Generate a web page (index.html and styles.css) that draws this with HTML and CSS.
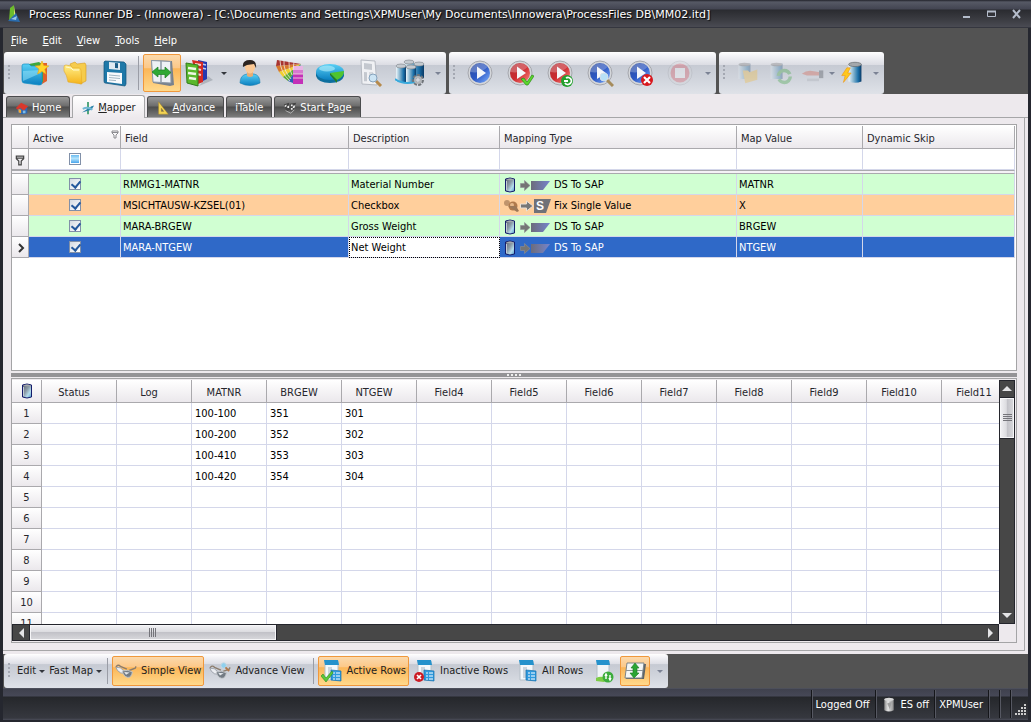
FILE: index.html
```html
<!DOCTYPE html>
<html lang="en">
<head>
    <meta charset="UTF-8">
    <meta name="viewport" content="width=device-width, initial-scale=1.0">
    <title>Process Runner DB</title>
    <link rel="stylesheet" href="styles.css">
</head>
<body>
    <!-- shared icons -->
    <svg class="defs" aria-hidden="true">
        <defs>
            <linearGradient id="gBlue" x1="0" y1="0" x2="0" y2="1"><stop offset="0" stop-color="#5ad0f5"/><stop offset="1" stop-color="#0a7fc0"/></linearGradient>
            <linearGradient id="gYellow" x1="0" y1="0" x2="0" y2="1"><stop offset="0" stop-color="#fff08a"/><stop offset="1" stop-color="#f5b31a"/></linearGradient>
            <linearGradient id="gPlay" x1="0" y1="0" x2="1" y2="1"><stop offset="0" stop-color="#2c4a9c"/><stop offset=".5" stop-color="#2d58c4"/><stop offset="1" stop-color="#7db0ff"/></linearGradient>
            <linearGradient id="gRed" x1="0" y1="0" x2="1" y2="1"><stop offset="0" stop-color="#b03038"/><stop offset=".5" stop-color="#cc2a30"/><stop offset="1" stop-color="#ff8a80"/></linearGradient>
            <linearGradient id="gDb" x1="0" y1="0" x2="1" y2="0"><stop offset="0" stop-color="#eef6fa"/><stop offset=".4" stop-color="#7fb0cc"/><stop offset=".75" stop-color="#1a6fa8"/><stop offset="1" stop-color="#0b3a66"/></linearGradient>
            <linearGradient id="gCyl" x1="0" y1="0" x2="1" y2="1"><stop offset="0" stop-color="#5c6070"/><stop offset=".45" stop-color="#8c9ca8"/><stop offset=".7" stop-color="#b4dcec"/><stop offset="1" stop-color="#4a98c8"/></linearGradient>
            <linearGradient id="gTrap" x1="0" y1="0" x2="1" y2="0"><stop offset="0" stop-color="#6c6c7c"/><stop offset="1" stop-color="#7684cc"/></linearGradient>
            <linearGradient id="gGrey" x1="0" y1="0" x2="1" y2="0"><stop offset="0" stop-color="#8c8c8c"/><stop offset=".4" stop-color="#e6e6e6"/><stop offset="1" stop-color="#8a8a8a"/></linearGradient>
        </defs>
        <symbol id="play" viewBox="0 0 28 28">
            <circle cx="14" cy="14" r="12" fill="#d4d6da" stroke="#a6a8ae"/>
            <circle cx="14" cy="14" r="10" fill="url(#gPlay)"/>
            <path d="M4.500 13a9.500 9.500 0 0 1 17-5Q15 15 4.500 13z" fill="#fff" opacity=".25"/>
            <path d="M11 7.500 20 14 11 20z" fill="#f4f6fa"/>
        </symbol>
        <symbol id="playRed" viewBox="0 0 28 28">
            <circle cx="14" cy="14" r="12" fill="#d4d6da" stroke="#a6a8ae"/>
            <circle cx="14" cy="14" r="10" fill="url(#gRed)"/>
            <path d="M4.500 13a9.500 9.500 0 0 1 17-5Q15 15 4.500 13z" fill="#fff" opacity=".25"/>
            <path d="M11 7.500 20 14 11 20z" fill="#f4f6fa"/>
        </symbol>
        <symbol id="db" viewBox="0 0 12 16">
            <path d="M1.500 2Q6 0 10.500 2v12Q6 16 1.500 14z" fill="url(#gCyl)" stroke="#141c6c"/>
            <path d="M2 2.500Q6 4 10 2.500 6 .5 2 2.500z" fill="#a4a8ac"/>
            <path d="M2.500 4v9" stroke="#c4ccd4"/>
        </symbol>
        <symbol id="ds" viewBox="0 0 48 16">
            <use href="#db" x="0" y="0" width="12" height="16"/>
            <path d="M16.500 6.500h4V3.500L26 8.500l-5.500 5v-3h-4z" fill="#757575" stroke="#8f8f96" stroke-width=".6"/>
            <path d="M27 4h19l-7 9H27z" fill="url(#gTrap)"/>
        </symbol>
        <symbol id="rows" viewBox="0 0 22 24">
            <path d="M4 2h13v19H4z" fill="#f4f8fb" stroke="#b6c0c8"/><path d="M3 1h14l1 5H4z" fill="#2592cc"/>
            <path d="M7 8h4v11H7z" fill="#ccd6de"/>
            <path d="M10 11l10 1v10l-10-1z" fill="#2f9ade" stroke="#1470ac" stroke-width=".7"/>
            <path d="M12 14h2m1 0h4M12 17h2m1 0h4M12 20h2m1 0h4" stroke="#fff"/>
        </symbol>
        <symbol id="glasses" viewBox="0 0 24 16">
            <path d="M1 4q2-4 5-1l7 3M14 8l8-3 1-2" fill="none" stroke="#8c7c6c" stroke-width="1.500"/>
            <path d="M1 4q5-1 9 4-1 4-4 2-4-2-5-6z" fill="#eceef2" stroke="#9aa0a8"/>
            <path d="M8 8q6-2 11 1-1 6-5 6-5-1-6-7z" fill="#737b84" stroke="#c4c8cc"/>
            <path d="M10 9l6 .5-4 2.500z" fill="#e4e8ec"/>
        </symbol>
        <symbol id="funnel" viewBox="0 0 8 9">
            <path d="M1 1h6v2L5 5v3H3V5L1 3zM1 2.500h6" fill="none" stroke="currentColor"/>
        </symbol>
    </svg>

    <header class="title-bar">
        <svg class="app-icon" viewBox="0 0 14 18"><path d="M3 3 7 0v14l-5 2z" fill="#6cbc2c"/><path d="M7 1l2 12-2 2z" fill="#d4e86a"/><path d="M1 16l8-8 4 9z" fill="#2a6cae"/><path d="M4 14l6-3-1 4z" fill="#9cc8e8"/></svg>
        <h1>Process Runner DB - (Innowera) - [C:\Documents and Settings\XPMUser\My Documents\Innowera\ProcessFiles DB\MM02.itd]</h1>
        <div class="window-buttons">
            <button aria-label="Minimize"><svg width="11" height="10"><path d="M2 8h7" stroke="#b4bccb" stroke-width="2"/></svg></button>
            <button aria-label="Maximize"><svg width="11" height="10"><path d="M1.500 2.500h8v5h-8z" fill="none" stroke="#b4bccb"/><path d="M1 2.500h9" stroke="#b4bccb" stroke-width="2"/></svg></button>
            <button aria-label="Close"><svg width="11" height="10"><path d="M2 1l7 8M9 1L2 9" stroke="#b4bccb" stroke-width="2"/></svg></button>
        </div>
    </header>

    <nav class="menu">
        <button><u>F</u>ile</button>
        <button><u>E</u>dit</button>
        <button><u>V</u>iew</button>
        <button><u>T</u>ools</button>
        <button><u>H</u>elp</button>
    </nav>

    <div class="toolbars">
        <div class="toolbar">
            <span class="handle"></span>
            <button class="tool" aria-label="New"><svg viewBox="0 0 28 28"><path d="M13 4h13v18l-5 3V8z" fill="#e0602c"/><path d="M8 5l10-2 4 3v17H8z" fill="#3fa83c"/><path d="M1 7q0-2 2-2h5l2 2h8q3 0 3 3v14q0 2-3 2L3 24q-2 0-2-3z" fill="url(#gBlue)" stroke="#1490c4" stroke-width=".7"/><path d="M2 12l18-1v3L2 22z" fill="#9ce8fc" opacity=".5"/><path d="M21 2l1.800 4.500 5 .5-4 3.200 1.400 5-4.200-2.800-4.400 2.600 1.400-5L14 7l5-.5z" fill="#ffd52a" stroke="#e8a010" stroke-width=".6"/></svg></button>
            <button class="tool" aria-label="Open"><svg viewBox="0 0 28 28"><path d="M9 5l5-2 2 2 8-1 1 2v16l-6 3z" fill="#f6cc4c" stroke="#d89c1c" stroke-width=".6"/><path d="M3 8q0-2 2-2l5 1 2 2h6q2 0 2 3l1 13-14-2q-1-7-4-11z" fill="url(#gYellow)" stroke="#e4a824" stroke-width=".6"/><path d="M5 8l5 1 2 2h6" fill="none" stroke="#fffad0"/></svg></button>
            <button class="tool" aria-label="Save"><svg viewBox="0 0 28 28"><path d="M4 2l19 1 2 2v20l-1 2L4 24q-1 0-1-2V3z" fill="#1e78a8" stroke="#11557c" stroke-width=".7"/><path d="M8 3l11 1v7L8 10z" fill="#dfeaf2"/><path d="M14 4l3 .3v5l-3-.3z" fill="#1b5c86"/><path d="M6 13l15 1v11L6 23z" fill="#f8fafc"/><path d="M8 16l11 1M8 18.500l11 1M8 21l7 .6" stroke="#8ba4b4" stroke-width=".8"/></svg></button>
            <span class="divider"></span>
            <button class="tool pressed" aria-label="Mapper view"><svg viewBox="0 0 28 28"><path d="M3 1l21 1 2 24-4 1L5 24z" fill="#78828e"/><path d="M3.500 1.500l19 1 .5 21.500-18-1z" fill="#eef1f5" stroke="#8e99a6"/><path d="M13 2v21" stroke="#8e99a4" stroke-width="1.500"/><path d="M4 13l6-5v3h7V8l6 5.500-6 5.500v-3.500h-7V18z" fill="#2fa834" stroke="#1c7c24" stroke-width=".7"/></svg></button>
            <button class="tool medium" aria-label="Templates"><svg viewBox="0 0 28 28"><path d="M14 27l14-6-5-4z" fill="#8c949c" opacity=".5"/><path d="M13 1l9 2v17l-6 3z" fill="#2438b0"/><path d="M17 5l4 1m-4 3 4 1" stroke="#c4ccf0" stroke-width="1.500"/><path d="M7 1l11 2v20l-5 2z" fill="#d42a24"/><path d="M10 5l6 1m-4 4 4 1m-4 4 4 1" stroke="#f8d4d0" stroke-width="2"/><path d="M1 4l12 2v21L2 24z" fill="#5ab82c" stroke="#327c1c"/><path d="M3 9l8 1M3 14l8 1M4 19l7 1" stroke="#eef8e4" stroke-width="2.500"/></svg></button>
            <button class="arrow small dark" aria-label="Template list"></button>
            <button class="tool" aria-label="User"><svg viewBox="0 0 28 28"><path d="M4 24q0-8 7-9h7q6 1 6 9-10 5-20 0z" fill="url(#gBlue)" stroke="#107cae" stroke-width=".6"/><path d="M11 12h6v5q-3 2-6 0z" fill="#e8ac74"/><ellipse cx="14" cy="8" rx="5" ry="6.500" fill="#fbc894"/><path d="M7 8q-1-7 7-7 7 0 6 8l-2-4-7 1z" fill="#2c2420"/></svg></button>
            <button class="tool" aria-label="Colors"><svg viewBox="0 0 28 28"><path d="M25 5 1 1 0 7z" fill="#a83430"/><path d="M25 5 0 7l3 6z" fill="#d8782c"/><path d="M25 5 3 13l4 5z" fill="#f0d030"/><path d="M25 5 7 18l5 4z" fill="#5cae34"/><path d="M25 5 12 22l5 2z" fill="#2c60b4"/><path d="M17 7h10v18H17z" fill="#c430b8"/><path d="M17 7h10v4H17z" fill="#e8b4e4"/><path d="M17 11h10v4H17z" fill="#d878d0"/><path d="M17 15h10M17 19h10M18 3 17 11M13 2q-1 6 3 14M8 2q-1 9 7 18M4 1q0 12 10 21" fill="none" stroke="#f0e8e0" stroke-width=".8"/></svg></button>
            <button class="tool" aria-label="Chart"><svg viewBox="0 0 28 28"><path d="M0 13v4q2 7 14 7t14-7v-4z" fill="#0d6f9e"/><ellipse cx="14" cy="13" rx="14" ry="8" fill="url(#gBlue)"/><ellipse cx="11" cy="9.500" rx="8" ry="3" fill="#b8f0fc" opacity=".6"/><path d="M14 14l14-2q0 6-7 9z" fill="#4fc42e"/><path d="M14 14l7 7v3l-7-8z" fill="#26801c"/></svg></button>
            <button class="tool" aria-label="Preview"><svg viewBox="0 0 28 28"><path d="M5 1l14 1 2 24-15-1z" fill="#f0f1f4" stroke="#b6bac2"/><path d="M8 4l8 1v6l-8-1zM8 13l3 .2v9H8z" fill="#c4c8cf"/><path d="M13 13h4v8h-4z" fill="#d6d9de"/><path d="M20 22l5 5" stroke="#b68a4c" stroke-width="3"/><circle cx="17" cy="19" r="4" fill="#cce4f4" stroke="#86a2bc"/></svg></button>
            <button class="tool" aria-label="Database"><svg class="wide" viewBox="0 0 30 28"><path d="M9 3h10v13H9zM19 5h10v14H19z" fill="url(#gDb)"/><path d="M1 7h10v16H1z" fill="url(#gDb)"/><path d="M11 8h10v16H11z" fill="url(#gDb)"/><g fill="#c4cad0" stroke="#7c8288" stroke-width=".6"><ellipse cx="14" cy="3" rx="5" ry="2"/><ellipse cx="24" cy="5" rx="5" ry="2"/><ellipse cx="6" cy="7" rx="5" ry="2"/><ellipse cx="16" cy="8" rx="5" ry="2"/></g><path d="M0 20q8 6 20 3" stroke="#37a9dc" stroke-width="2" fill="none"/><circle cx="23" cy="21" r="4" fill="none" stroke="#70757a" stroke-width="4" stroke-dasharray="2.500 1"/><circle cx="23" cy="21" r="3" fill="none" stroke="#b2b5b8" stroke-width="2"/></svg></button>
            <button class="arrow" aria-label="Toolbar options"></button>
        </div>
        <div class="toolbar">
            <span class="handle"></span>
            <button class="tool" aria-label="Run"><svg><use href="#play"/></svg></button>
            <button class="tool" aria-label="Run and validate"><svg viewBox="0 0 28 28"><use href="#playRed"/><path d="M15 20l3-1 3 4 5-7 2 1-6 9h-2z" fill="#5bd62c" stroke="#2c8c18" stroke-width=".7"/></svg></button>
            <button class="tool" aria-label="Run again"><svg viewBox="0 0 28 28"><use href="#playRed"/><circle cx="21" cy="22" r="6" fill="#22a02c"/><path d="M18 22h4m-2-3a3.500 3.500 0 1 1-1 5" fill="none" stroke="#fff" stroke-width="1.800"/></svg></button>
            <button class="tool" aria-label="Run with preview"><svg viewBox="0 0 28 28"><use href="#play"/><path d="M20 20l7 7" stroke="#a68c5c" stroke-width="3"/><circle cx="18" cy="18" r="4" fill="#b8e0f6" stroke="#d4e0e8"/></svg></button>
            <button class="tool" aria-label="Cancel run"><svg viewBox="0 0 28 28"><use href="#play"/><circle cx="21" cy="21" r="6" fill="#d8181e"/><path d="M18 18l6 6m0-6-6 6" stroke="#fff" stroke-width="2.200"/></svg></button>
            <button class="tool" aria-label="Stop" disabled><svg viewBox="0 0 28 28"><circle cx="14" cy="14" r="12" fill="#d4d6da" stroke="#a6a8ae"/><circle cx="14" cy="14" r="9.500" fill="#d84450"/><path d="M9 9h10v10H9z" fill="#fff"/></svg></button>
            <button class="arrow" aria-label="Toolbar options"></button>
        </div>
        <div class="toolbar">
            <span class="handle"></span>
            <button class="tool narrow" aria-label="Open database" disabled><svg viewBox="0 0 28 28"><path d="M4 3h14v18H4z" fill="url(#gDb)"/><ellipse cx="11" cy="4" rx="7" ry="2" fill="#666"/><path d="M9 11h6l2 2 9-3v12l-14 4z" fill="#f4b82c"/></svg></button>
            <button class="tool narrow" aria-label="Refresh database" disabled><svg viewBox="0 0 28 28"><path d="M3 3h14v18H3z" fill="url(#gDb)"/><ellipse cx="10" cy="4" rx="7" ry="2" fill="#666"/><circle cx="19" cy="18" r="7" fill="none" stroke="#2a9c2c" stroke-width="4" stroke-dasharray="18 4"/></svg></button>
            <button class="tool narrow" aria-label="Share" disabled><svg viewBox="0 0 28 28"><path d="M1 15q6-5 14-3l7 1v4H7z" fill="#d84c34"/><path d="M21 11h5v9h-5z" fill="#34383e"/><path d="M7 22h14" stroke="#a4a8ae" stroke-width="3"/></svg></button>
            <button class="arrow tight" aria-label="Share options"></button>
            <button class="tool narrow" aria-label="Connect"><svg viewBox="0 0 28 28"><path d="M10 4h15v20q-7 3-15 0z" fill="url(#gDb)"/><ellipse cx="17.500" cy="4" rx="7.500" ry="2.500" fill="#a4a8ac" stroke="#64686c" stroke-width=".8"/><path d="M8 8 2 17h4l-2 8 9-11H9l3-6z" fill="#ffc81e" stroke="#ee9414" stroke-width=".7"/></svg></button>
            <button class="arrow" aria-label="Toolbar options"></button>
        </div>
    </div>

    <main class="workspace">
        <div class="tabs" role="tablist">
            <button class="tab" role="tab"><svg viewBox="0 0 16 16"><path d="M3 7l5-4 6 4v7l-6 1-5-2z" fill="#2d69b4"/><path d="M1 8l6-6 8 4-5 5-4-3-3 2z" fill="#d8382c"/><path d="M4 9l3 1v4l-3-1z" fill="#f4a834"/><path d="M9 11h3v3H9z" fill="#7cbce8"/></svg><span>H<u>o</u>me</span></button>
            <button class="tab active" role="tab" aria-selected="true"><svg viewBox="0 0 16 16"><path d="M8 1v14" stroke="#3c9c6c" stroke-width="2"/><path d="M1 13 12 6l3-1-3 5z" fill="#2b82a8"/><path d="M2 9q6-3 11 1" stroke="#70b8d4" stroke-width="2" fill="none"/></svg><span><u>M</u>apper</span></button>
            <button class="tab" role="tab"><svg viewBox="0 0 16 16"><path d="M3 1l11 14H3zM6 8v4h3z" fill="#f4d454" fill-rule="evenodd" stroke="#b08c24" stroke-width=".5"/></svg><span><u>A</u>dvance</span></button>
            <button class="tab plain" role="tab"><span>iTable</span></button>
            <button class="tab" role="tab"><svg viewBox="0 0 16 16"><path d="M1 4l6-2 1 8-4 2zM8 3l7-1-3 8-4 1z" fill="#444"/><path d="M2 5l2-1v2l-2 1zM5 6l2-1v3H5zM9 4h2v2H9zM12 5h2l-1 3h-2zM9 8h2v2H9z" fill="#eee"/><path d="M3 11l6 3 4-4" fill="none" stroke="#bbb"/></svg><span>Start <u>P</u>age</span></button>
        </div>

        <div class="page">
            <section class="panel map-panel">
                <table class="map-table">
                    <colgroup>
                        <col class="c-mark"><col class="c-active"><col class="c-field"><col class="c-desc"><col class="c-type"><col class="c-value"><col>
                    </colgroup>
                    <thead>
                        <tr>
                            <th></th>
                            <th><span class="filter-head">Active <svg class="funnel"><use href="#funnel"/></svg></span></th>
                            <th>Field</th>
                            <th>Description</th>
                            <th>Mapping Type</th>
                            <th>Map Value</th>
                            <th>Dynamic Skip</th>
                        </tr>
                        <tr class="filter-row">
                            <td class="mark"><svg class="funnel large"><use href="#funnel"/></svg></td>
                            <td class="check"><input type="checkbox" class="mixed" aria-label="Filter active"></td>
                            <td></td><td></td><td></td><td></td><td></td>
                        </tr>
                    </thead>
                    <tbody>
                        <tr class="gap-row"><td colspan="7"></td></tr>
                        <tr class="green">
                            <td class="mark"></td>
                            <td class="check"><input type="checkbox" aria-label="RMMG1-MATNR active" checked></td>
                            <td>RMMG1-MATNR</td>
                            <td>Material Number</td>
                            <td><span class="type"><svg><use href="#ds"/></svg>DS To SAP</span></td>
                            <td>MATNR</td>
                            <td></td>
                        </tr>
                        <tr class="orange">
                            <td class="mark"></td>
                            <td class="check"><input type="checkbox" aria-label="MSICHTAUSW-KZSEL(01) active" checked></td>
                            <td>MSICHTAUSW-KZSEL(01)</td>
                            <td>Checkbox</td>
                            <td><span class="type"><svg viewBox="0 0 48 16"><circle cx="3" cy="5" r="3" fill="#c0946c"/><circle cx="9" cy="8" r="4.500" fill="#b07a4c"/><circle cx="8" cy="7" r="2" fill="#e6b98c"/><path d="M4 8l9 6 2-1-3-5z" fill="#9c7858"/><path d="M16.500 6h6V3L29 8l-6.500 5v-3h-6z" fill="#777" stroke="#e8e0d8"/><path d="M30 1h17l-5 14H30z" fill="#707178"/><text x="32" y="12" class="s-mark">S</text></svg>Fix Single Value</span></td>
                            <td>X</td>
                            <td></td>
                        </tr>
                        <tr class="green">
                            <td class="mark"></td>
                            <td class="check"><input type="checkbox" aria-label="MARA-BRGEW active" checked></td>
                            <td>MARA-BRGEW</td>
                            <td>Gross Weight</td>
                            <td><span class="type"><svg><use href="#ds"/></svg>DS To SAP</span></td>
                            <td>BRGEW</td>
                            <td></td>
                        </tr>
                        <tr class="selected">
                            <td class="mark"><svg class="pointer" viewBox="0 0 8 10"><path d="M2 1l4 4-4 4" fill="none" stroke="#333" stroke-width="2"/></svg></td>
                            <td class="check"><input type="checkbox" aria-label="MARA-NTGEW active" checked></td>
                            <td>MARA-NTGEW</td>
                            <td class="focused">Net Weight</td>
                            <td><span class="type"><svg><use href="#ds"/></svg>DS To SAP</span></td>
                            <td>NTGEW</td>
                            <td></td>
                        </tr>
                    </tbody>
                </table>
            </section>

            <div class="splitter"><span></span></div>

            <section class="panel data-panel">
                <div class="sheet-area">
                    <table class="sheet">
                        <colgroup id="sheetCols"><col class="c-num"></colgroup>
                        <thead><tr id="sheetHead"><th class="corner"><svg><use href="#db"/></svg></th></tr></thead>
                        <tbody id="sheetBody"></tbody>
                    </table>
                </div>
                <div class="scroll vertical">
                    <button class="up" aria-label="Scroll up"></button>
                    <span class="thumb"></span>
                    <button class="down" aria-label="Scroll down"></button>
                </div>
                <div class="scroll horizontal">
                    <button class="left" aria-label="Scroll left"></button>
                    <span class="thumb"></span>
                    <button class="right" aria-label="Scroll right"></button>
                </div>
            </section>
        </div>
    </main>

    <div class="toolbars bottom">
        <div class="toolbar">
            <span class="handle"></span>
            <button class="text-menu">Edit</button>
            <button class="text-menu">Fast Map</button>
            <span class="divider"></span>
            <button class="view pressed"><svg><use href="#glasses"/></svg>Simple View</button>
            <button class="view"><svg viewBox="0 0 24 20"><use href="#glasses" y="3" width="24" height="16"/><circle cx="16" cy="4" r="3" fill="#8fd0ee" stroke="#c4d8e4"/><path d="M18 6l4 4" stroke="#b0784c" stroke-width="2"/></svg>Advance View</button>
            <span class="divider"></span>
            <button class="view pressed"><svg viewBox="0 0 22 24"><use href="#rows"/><path d="M0 17l2-2 3 4 6-7 1 2-7 9z" fill="#5cc83c" stroke="#2c8c20" stroke-width=".6"/></svg>Active Rows</button>
            <button class="view"><svg viewBox="0 0 22 24"><use href="#rows"/><circle cx="5" cy="18" r="5" fill="#cc1c24"/><path d="M3 16l4 4m0-4-4 4" stroke="#fff" stroke-width="1.700"/></svg>Inactive Rows</button>
            <button class="view"><svg><use href="#rows"/></svg>All Rows</button>
            <button class="view icon-only" aria-label="Refresh rows"><svg viewBox="0 0 22 24"><path d="M5 2h12v18H5z" fill="#f0f4f7" stroke="#b4bec6"/><path d="M4 1h13l1 5H5z" fill="#2592cc"/><path d="M4 19q6-3 12 1l-4 3-8-1z" fill="#7ccc44"/><circle cx="16" cy="18" r="5.500" fill="#3cac3c"/><path d="M14 20v-4m4 0v4M13 17l1-2 1 2m2 2 1 2 1-2" stroke="#fff" stroke-width="1.400" fill="none"/></svg></button>
            <button class="view icon-only pressed" aria-label="Row height"><svg viewBox="0 0 22 24"><path d="M4 5h18l-2 15H2z" fill="#5c6468"/><path d="M3 4h17l-2 15H1z" fill="#f4f6f6" stroke="#7c8488"/><path d="M2 11.500h17" stroke="#8c9498"/><path d="M11 4l4 5h-2v5h2l-5 5-4-5h3V9H7z" fill="#2ca434" stroke="#187c20" stroke-width=".6"/></svg></button>
            <button class="arrow" aria-label="Toolbar options"></button>
        </div>
    </div>

    <footer class="status-bar">
        <span class="status-item">Logged Off</span>
        <span class="status-item"><svg viewBox="0 0 12 16"><path d="M1 2v12q5 3 10 0V2z" fill="url(#gGrey)"/><ellipse cx="6" cy="2.500" rx="5" ry="1.800" fill="#d8d8d8"/><path d="M4 7l5-2-2 8z" fill="#a0a0a0"/></svg>ES off</span>
        <span class="status-item">XPMUser</span>
        <span class="status-item blank"></span>
        <span class="status-item blank"></span>
        <span class="status-item grip"><svg viewBox="0 0 12 12"><path d="M9 0h2v2H9zM6 3h2v2H6zM9 3h2v2H9zM3 6h2v2H3zM6 6h2v2H6zM9 6h2v2H9zM0 9h2v2H0zM3 9h2v2H3zM6 9h2v2H6zM9 9h2v2H9z" fill="#ccc"/></svg></span>
    </footer>

    <script>
        const columns = ['Status', 'Log', 'MATNR', 'BRGEW', 'NTGEW'];
        for (let i = 4; i <= 11; i++) {
            columns.push('Field' + i);
        }
        const records = [
            ['', '', '100-100', '351', '301'],
            ['', '', '100-200', '352', '302'],
            ['', '', '100-410', '353', '303'],
            ['', '', '100-420', '354', '304']
        ];

        const cols = document.getElementById('sheetCols');
        const head = document.getElementById('sheetHead');
        columns.forEach(function(name) {
            cols.appendChild(document.createElement('col'));
            const th = document.createElement('th');
            th.textContent = name;
            head.appendChild(th);
        });

        const body = document.getElementById('sheetBody');
        for (let r = 0; r < 11; r++) {
            const row = body.insertRow();
            const num = document.createElement('th');
            num.textContent = r + 1;
            row.appendChild(num);
            columns.forEach(function(name, c) {
                row.insertCell().textContent = records[r] ? records[r][c] || '' : '';
            });
        }
    </script>
</body>
</html>
```
FILE: styles.css
```css
* {
    box-sizing: border-box;
}

body {
    margin: 0;
    height: 100vh;
    padding: 0 3px 2px;
    display: flex;
    flex-direction: column;
    overflow: hidden;
    background: #25272f;
    color: #222;
    font-family: "DejaVu Sans Condensed", "Noto Sans", sans-serif;
    font-size: 11px;
    line-height: 14px;
}

button {
    font: inherit;
    color: inherit;
    background: none;
    border: none;
    padding: 0;
    white-space: nowrap;
}

svg {
    display: block;
    flex: none;
}

.defs {
    position: absolute;
    width: 0;
    height: 0;
}

.s-mark {
    font: bold 12px "Liberation Sans", sans-serif;
    fill: #fff;
}

/* title and menu */

.title-bar {
    display: flex;
    align-items: center;
    height: 28px;
    flex: none;
    margin: 0 -3px;
    padding: 0 9px 0 7px;
    background: linear-gradient(#22232b 0, #565965 2px, #434552 9px, #2a2b30 10px, #3c3d43 20px, #4a4b53 27px, #20222b 28px);
}

.app-icon {
    width: 14px;
    height: 18px;
    margin-right: 8px;
}

.title-bar h1 {
    flex: 1;
    margin: 0;
    padding-top: 1px;
    font-family: "DejaVu Sans", sans-serif;
    font-size: 11px;
    font-weight: normal;
    color: #fff;
    text-shadow: 1px 1px 1px #000;
    white-space: nowrap;
    overflow: hidden;
}

.window-buttons {
    display: flex;
    gap: 14px;
}

.menu {
    display: flex;
    flex: none;
    gap: 15px;
    height: 24px;
    padding: 1px 8px 0;
    background: #535353;
    color: #fff;
}

/* toolbars */

.toolbars {
    display: flex;
    flex: none;
    gap: 3px;
    height: 42px;
    padding-left: 1px;
    background: #535353;
}

.toolbar {
    display: flex;
    align-items: center;
    border-radius: 3px;
    background: linear-gradient(#fff 0, #f2f2f6 10%, #dcdde4 30%, #c6cad3 31%, #cfd3db 60%, #dfe2e8 100%);
}

.handle {
    width: 2px;
    height: 16px;
    margin: 0 5px 0 4px;
    background: repeating-linear-gradient(#a4a8b2 0 2px, transparent 2px 4px);
}

.divider {
    width: 1px;
    height: 34px;
    margin: 0 4px 0 3px;
    background: #9a9da6;
}

.tool {
    display: flex;
    align-items: center;
    justify-content: center;
    width: 40px;
    height: 38px;
}

.tool svg {
    width: 28px;
    height: 28px;
}

.tool .wide {
    width: 30px;
}

.tool.medium {
    width: 36px;
}

.tool.narrow {
    width: 33px;
}

.tool.narrow svg {
    width: 24px;
    height: 24px;
}

.tool:disabled {
    opacity: 0.3;
}

.tool.pressed {
    width: 38px;
}

.arrow {
    display: flex;
    justify-content: center;
    width: 16px;
}

.arrow.small {
    width: 13px;
}

.arrow.tight {
    width: 6px;
}

.arrow::before,
.text-menu::after {
    content: "";
    border: 3px solid transparent;
    border-top-color: #7b8294;
    border-bottom: 0;
}

.arrow.dark::before,
.text-menu::after {
    border-top-color: #33363c;
}

/* tabs and page */

.workspace {
    flex: 1;
    min-height: 0;
    display: flex;
    flex-direction: column;
    padding-bottom: 3px;
    background: #ede9ed;
}

.tabs {
    display: flex;
    align-items: flex-end;
    flex: none;
    gap: 2px;
    height: 24px;
    padding: 0 3px;
    border-bottom: 1px solid #a6a6a8;
}

.tab {
    display: flex;
    align-items: center;
    gap: 3px;
    height: 21px;
    padding: 1px 8px 0;
    border: 1px solid #4b4b4d;
    border-bottom: none;
    border-radius: 3px 3px 0 0;
    background: linear-gradient(#9a9a9a, #6c6c6c 45%, #4d4d4d 50%, #7c7c7c);
    color: #fff;
}

.tab svg {
    width: 14px;
    height: 14px;
}

.tab.active {
    height: 23px;
    margin-bottom: -1px;
    border-color: #a6a6a8;
    background: linear-gradient(#fff, #ede9ed);
    color: #222;
}

.page {
    flex: 1;
    min-height: 0;
    display: flex;
    flex-direction: column;
    margin-right: 3px;
    padding: 6px 7px 7px 8px;
    border-right: 1px solid #a6a6a8;
    border-bottom: 1px solid #a6a6a8;
}

.panel {
    border: 1px solid #a4a4a6;
    background: #fff;
    overflow: hidden;
}

table {
    border-collapse: separate;
    border-spacing: 0;
    table-layout: fixed;
}

th,
td {
    padding: 2px 2px 0;
    border-right: 1px solid #d4d7ea;
    border-bottom: 1px solid #d4d7ea;
    text-align: left;
    font-weight: normal;
    white-space: nowrap;
    overflow: hidden;
}

th,
.mark {
    border-color: #aaa9ad;
    background: linear-gradient(#fff, #ebe8ec);
    color: #26262c;
}

/* mapping grid */

.map-panel {
    flex: 1;
    min-height: 0;
    padding: 1px 1px 0 0;
}

.map-table {
    width: 100%;
}

.c-mark {
    width: 17px;
}

.c-active {
    width: 92px;
}

.c-field {
    width: 228px;
}

.c-desc {
    width: 151px;
}

.c-type {
    width: 237px;
}

.c-value {
    width: 126px;
}

.map-table th {
    height: 23px;
    padding: 3px 4px 0;
}

.map-table td {
    height: 21px;
    color: #000;
}

.filter-head {
    display: flex;
    justify-content: space-between;
    color: inherit;
}

.funnel {
    width: 8px;
    height: 9px;
    margin: -2px -3px 0 0;
    color: #8c8c90;
}

.funnel.large {
    width: 10px;
    height: 11px;
    margin: 0 0 0 1px;
    color: #444;
}

.map-table td.check {
    padding: 0;
    text-align: center;
}

.check input {
    appearance: none;
    display: block;
    width: 12px;
    height: 12px;
    margin: 0 auto;
    border: 1px solid #8190a8;
    background: linear-gradient(135deg, #d4dae2, #fff);
}

.check input:checked::after {
    content: "";
    display: block;
    width: 4px;
    height: 7px;
    margin: 0 0 0 3px;
    border: solid #24589c;
    border-width: 0 2px 2px 0;
    transform: rotate(40deg);
}

.check .mixed {
    padding: 1px;
    background: linear-gradient(#6cbcf0, #b4e4fc 45%, #48a4ec) content-box, #fff;
}

.map-table .gap-row td {
    height: 4px;
    padding: 0;
    border-bottom: 1px solid #a9a9ad;
    border-top: 1px solid #a9a9ad;
    background: #f4f2f6;
}

.green td {
    background: #d0ffd2;
}

.orange td {
    background: #ffcf9c;
}

.map-table .selected td {
    background: #2f69c8;
    color: #fff;
}

.map-table tr td.mark {
    background: linear-gradient(#fff, #ebe8ec);
}

.map-table .selected td.focused {
    background: #fff;
    color: #000;
    outline: 1px dotted #000;
    outline-offset: -1px;
}

.pointer {
    width: 8px;
    height: 10px;
    margin-left: 3px;
}

.type {
    display: flex;
    align-items: center;
    gap: 2px;
}

.type svg {
    width: 48px;
    height: 16px;
    margin-left: 2px;
}

.splitter {
    flex: none;
    height: 7px;
    padding-top: 2px;
}

.splitter span {
    display: block;
    height: 4px;
    padding-top: 1px;
    background: #949396;
}

.splitter span::before {
    content: "";
    display: block;
    width: 15px;
    height: 2px;
    margin: 0 auto;
    background: repeating-linear-gradient(90deg, #eee 0 2px, transparent 2px 4px);
}

/* data sheet */

.data-panel {
    flex: none;
    display: grid;
    grid-template-columns: 1fr 16px;
    grid-template-rows: 1fr 17px;
    height: 265px;
    padding: 1px 1px 1px 0;
    background: #ede9ed;
}

.sheet-area {
    min-width: 0;
    min-height: 0;
    overflow: hidden;
    background: #fff;
}

.sheet {
    width: 1005px;
}

.c-num {
    width: 30px;
}

.sheet th {
    height: 21px;
    text-align: center;
}

.sheet td {
    height: 21px;
    padding-left: 3px;
    color: #000;
}

.sheet thead th {
    height: 23px;
    padding-top: 3px;
    padding-right: 12px;
}

.sheet thead .corner {
    padding: 0;
}

.corner svg {
    width: 12px;
    height: 16px;
    margin: 0 auto;
}

.scroll {
    display: flex;
    border: 1px solid #24252c;
    background: #474747;
}

.scroll.vertical {
    flex-direction: column;
    align-items: center;
}

.scroll button {
    flex: none;
    display: flex;
    align-items: center;
    justify-content: center;
    width: 16px;
    height: 15px;
}

.scroll button::before {
    content: "";
    border: 5px solid transparent;
}

.scroll .up::before {
    border-bottom-color: #e4e4e6;
    border-top: 0;
}

.scroll .down::before {
    border-top-color: #e4e4e6;
    border-bottom: 0;
}

.scroll .left::before {
    border-right-color: #e4e4e6;
    border-left: 0;
}

.scroll .right::before {
    border-left-color: #e4e4e6;
    border-right: 0;
}

.scroll .down {
    margin-top: auto;
}

.scroll .right {
    margin-left: auto;
}

.thumb {
    display: flex;
    align-items: center;
    justify-content: center;
    border: 1px solid #f6f6f8;
    outline: 1px solid #24252c;
}

.vertical .thumb {
    width: 100%;
    height: 40px;
    margin-top: 2px;
    background: linear-gradient(90deg, #efeff2, #dcdce0 45%, #c2c2c8 50%, #d6d6da);
}

.vertical .thumb::before {
    content: "";
    width: 9px;
    height: 8px;
    background: repeating-linear-gradient(#74747a 0 1px, transparent 1px 2px);
}

.horizontal .thumb {
    width: 25%;
    margin-left: 1px;
    background: linear-gradient(#efeff2, #dcdce0 45%, #c2c2c8 50%, #d6d6da);
}

.horizontal .thumb::before {
    content: "";
    width: 8px;
    height: 9px;
    background: repeating-linear-gradient(90deg, #74747a 0 1px, transparent 1px 2px);
}

/* bottom toolbar */

.bottom {
    height: 34px;
}

.bottom .divider {
    height: 26px;
}

.text-menu {
    display: flex;
    align-items: center;
    gap: 3px;
    padding: 0 2px;
}

.view {
    display: flex;
    align-items: center;
    gap: 4px;
    height: 30px;
    margin-right: 2px;
    padding: 0 2px;
    border: 1px solid transparent;
}

.view svg {
    width: 22px;
    height: 24px;
}

.view.icon-only {
    justify-content: center;
    width: 30px;
    padding: 0;
}

.pressed {
    border: 1px solid #f0983c;
    border-radius: 2px;
    background: linear-gradient(#fbd9ac 0, #fcc888 36%, #fbb658 38%, #ffd98c 100%);
}

/* status bar */

.status-bar {
    display: flex;
    justify-content: flex-end;
    flex: none;
    height: 32px;
    padding: 2px 0;
    background: linear-gradient(#5a5d68 0, #3f414d 1px, #464857 8px, #25272b 9px, #36383f 30px, #4a4c58 32px);
    color: #fff;
}

.status-item {
    display: flex;
    align-items: center;
    gap: 6px;
    padding: 1px 5px 0 4px;
    border-left: 1px solid #15161a;
    box-shadow: inset 1px 0 0 #565862;
}

.status-item svg {
    width: 12px;
    height: 15px;
    margin-left: 3px;
}

.status-item.blank {
    width: 11px;
    padding: 0;
}

.status-item.grip {
    align-items: flex-end;
    padding: 0 1px 2px 1px;
}

.status-item.grip svg {
    width: 12px;
    height: 12px;
}
```
